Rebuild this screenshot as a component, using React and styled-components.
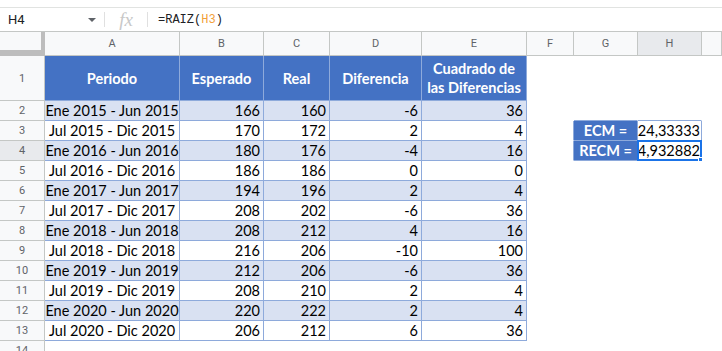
import React from "react";
import styled, { createGlobalStyle } from "styled-components";

const GlobalStyle = createGlobalStyle`
  body {
    margin: 0;
    background: #fff;
    font-family: Roboto, "Liberation Sans", sans-serif;
  }
  * { box-sizing: border-box; }
`;

const BLUE = "#4472c4";
const STRIPE = "#d9e1f2";
const EDGE = "#8eaadb";
const GRID = "#c4c7c5";

const Page = styled.div`
  width: 722px;
  height: 351px;
  overflow: hidden;
  background: #fff;
`;

const TopStrip = styled.div`
  height: 8px;
  border-bottom: 1px solid #e1e3e1;
`;

const FormulaBar = styled.div`
  display: flex;
  align-items: center;
  height: 24px;
  border-bottom: 1px solid ${GRID};
`;

const NameBox = styled.div`
  width: 104px;
  display: flex;
  align-items: center;
  justify-content: space-between;
  padding: 0 8px;
  font-size: 13px;
  color: #202124;
`;

const Caret = styled.span`
  width: 0;
  height: 0;
  border-left: 4px solid transparent;
  border-right: 4px solid transparent;
  border-top: 4px solid #5f6368;
`;

const Divider = styled.span`
  width: 1px;
  height: 15px;
  background: #e0e0e0;
`;

const Fx = styled.span`
  width: 42px;
  text-align: center;
  font-family: "Liberation Serif", serif;
  font-style: italic;
  font-size: 19px;
  color: #c8c8c8;
  line-height: 1;
`;

const Formula = styled.div`
  padding-left: 10px;
  font-family: "Liberation Mono", monospace;
  font-size: 12px;
  color: #202124;
`;

const Ref = styled.span`
  color: #f29f3a;
`;

const Sheet = styled.div`
  display: grid;
  grid-template-columns: 45px 135px 84px 66px 92px 105px 47px 64px 64px 1fr;
  grid-template-rows: 24px 45px repeat(13, 20px);
`;

const Corner = styled.div`
  background: #f8f9fa;
  border-right: 4px solid #bdbdbd;
  border-bottom: 6px solid #bdbdbd;
`;

const ColHead = styled.div`
  display: flex;
  align-items: center;
  justify-content: center;
  font-size: 11px;
  color: #5f6368;
  background: ${(p) => (p.$active ? "#e8eaed" : "#f8f9fa")};
  border-right: 1px solid ${GRID};
  border-bottom: 1px solid ${GRID};
`;

const RowHead = styled.div`
  display: flex;
  align-items: center;
  justify-content: center;
  font-size: 11px;
  color: #5f6368;
  background: ${(p) => (p.$active ? "#e8eaed" : "#f8f9fa")};
  border-right: 1px solid ${GRID};
  border-bottom: 1px solid ${GRID};
`;

const tones = {
  head: `background: ${BLUE}; color: #fff; font-weight: 700;`,
  stripe: `background: ${STRIPE}; color: #000;`,
  plain: `background: #fff; color: #000;`,
  empty: `background: #fff;`,
};

const Cell = styled.div`
  position: relative;
  display: flex;
  align-items: center;
  justify-content: ${(p) =>
    p.$align === "right" ? "flex-end" : "center"};
  text-align: center;
  padding: 0 ${(p) => (p.$tight ? "1px" : "3px")};
  font-family: Lato, "Liberation Sans", sans-serif;
  font-size: 14.5px;
  line-height: 19px;
  white-space: ${(p) => (p.$wrap ? "normal" : "nowrap")};
  ${(p) => tones[p.$tone || "empty"]}
  border-right: 1px solid ${(p) => p.$edgeR || "transparent"};
  border-bottom: 1px solid ${(p) => p.$edgeB || "transparent"};
`;

const Selection = styled.div`
  position: absolute;
  left: -1px;
  top: -1px;
  right: -1px;
  bottom: -1px;
  border: 2px solid #1a73e8;
  pointer-events: none;
`;

const Handle = styled.span`
  position: absolute;
  right: -5px;
  bottom: -5px;
  width: 7px;
  height: 7px;
  background: #1a73e8;
  border: 1px solid #fff;
`;

const COLS = ["A", "B", "C", "D", "E", "F", "G", "H", ""];

const HEADERS = ["Periodo", "Esperado", "Real", "Diferencia", "Cuadrado de las Diferencias"];

const rows = [
  ["Ene 2015 - Jun 2015", 166, 160, -6, 36],
  ["Jul 2015 - Dic 2015", 170, 172, 2, 4],
  ["Ene 2016 - Jun 2016", 180, 176, -4, 16],
  ["Jul 2016 - Dic 2016", 186, 186, 0, 0],
  ["Ene 2017 - Jun 2017", 194, 196, 2, 4],
  ["Jul 2017 - Dic 2017", 208, 202, -6, 36],
  ["Ene 2018 - Jun 2018", 208, 212, 4, 16],
  ["Jul 2018 - Dic 2018", 216, 206, -10, 100],
  ["Ene 2019 - Jun 2019", 212, 206, -6, 36],
  ["Jul 2019 - Dic 2019", 208, 210, 2, 4],
  ["Ene 2020 - Jun 2020", 220, 222, 2, 4],
  ["Jul 2020 - Dic 2020", 206, 212, 6, 36],
];

const stats = {
  3: ["ECM =", "24,33333"],
  4: ["RECM =", "4,932882"],
};

function SideCells({ n }) {
  const stat = stats[n];
  const aboveBox = n === 2;
  return (
    <>
      <Cell $edgeR={stat ? EDGE : undefined} />
      {stat ? (
        <Cell $tone="head" $edgeR={EDGE} $edgeB={EDGE}>
          {stat[0]}
        </Cell>
      ) : (
        <Cell $edgeB={aboveBox ? EDGE : undefined} />
      )}
      {stat ? (
        <Cell $tone="plain" $align="right" $tight $edgeR={EDGE} $edgeB={EDGE}>
          {stat[1]}
          {n === 4 && (
            <Selection>
              <Handle />
            </Selection>
          )}
        </Cell>
      ) : (
        <Cell $edgeB={aboveBox ? EDGE : undefined} />
      )}
      <Cell />
    </>
  );
}

export default function App() {
  return (
    <Page>
      <GlobalStyle />
      <TopStrip />
      <FormulaBar>
        <NameBox>
          H4
          <Caret />
        </NameBox>
        <Divider />
        <Fx>fx</Fx>
        <Divider />
        <Formula>
          =RAIZ(<Ref>H3</Ref>)
        </Formula>
      </FormulaBar>
      <Sheet>
        <Corner />
        {COLS.map((c, i) => (
          <ColHead key={i} $active={c === "H"}>
            {c}
          </ColHead>
        ))}

        <RowHead>1</RowHead>
        {HEADERS.map((h) => (
          <Cell key={h} $tone="head" $wrap $edgeR={EDGE} $edgeB={EDGE}>
            {h}
          </Cell>
        ))}
        <SideCells n={1} />

        {rows.map((r, i) => {
          const n = i + 2;
          const tone = i % 2 === 0 ? "stripe" : "plain";
          return (
            <React.Fragment key={n}>
              <RowHead $active={n === 4}>{n}</RowHead>
              {r.map((v, j) => (
                <Cell
                  key={j}
                  $tone={tone}
                  $align={j === 0 ? "center" : "right"}
                  $edgeR={EDGE}
                  $edgeB={EDGE}
                >
                  {v}
                </Cell>
              ))}
              <SideCells n={n} />
            </React.Fragment>
          );
        })}

        <RowHead>14</RowHead>
        {COLS.map((c, i) => (
          <Cell key={i} />
        ))}
      </Sheet>
    </Page>
  );
}
